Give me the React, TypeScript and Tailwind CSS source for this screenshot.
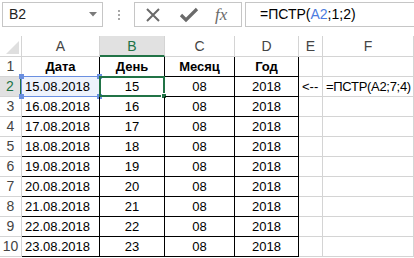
import React from "react";

const rows = [
  ["15.08.2018", "15", "08", "2018"],
  ["16.08.2018", "16", "08", "2018"],
  ["17.08.2018", "17", "08", "2018"],
  ["18.08.2018", "18", "08", "2018"],
  ["19.08.2018", "19", "08", "2018"],
  ["20.08.2018", "20", "08", "2018"],
  ["21.08.2018", "21", "08", "2018"],
  ["22.08.2018", "22", "08", "2018"],
  ["23.08.2018", "23", "08", "2018"],
];

const cols = ["A", "B", "C", "D", "E", "F"];

function Corner() {
  return (
    <div className="relative h-[21px] border-r border-b border-[#d4d4d4] bg-white">
      <svg className="absolute right-[2px] bottom-[2px]" width="13" height="13" viewBox="0 0 13 13">
        <polygon points="13,0 13,13 0,13" fill="#dfdfdf" />
      </svg>
    </div>
  );
}

function ColHeader({ label }: { label: string }) {
  const active = label === "B";
  return (
    <div
      className={
        active
          ? "flex h-[21px] items-center justify-center border-r border-b-2 border-r-[#d4d4d4] border-b-[#217346] bg-[#e1e1e1] pt-[2px] text-[14px] text-[#217346]"
          : "flex h-[21px] items-center justify-center border-r border-b border-[#d4d4d4] bg-white text-[14px] text-[#444]"
      }
    >
      {label}
    </div>
  );
}

function RowHeader({ n }: { n: number }) {
  const active = n === 2;
  return (
    <div
      className={
        active
          ? "flex h-5 items-center justify-center border-r-2 border-b border-r-[#217346] border-b-[#d4d4d4] bg-[#e1e1e1] text-[14px] text-[#217346]"
          : "flex h-5 items-center justify-center border-r border-b border-[#d4d4d4] bg-white text-[14px] text-[#444]"
      }
    >
      {n}
    </div>
  );
}

function Handle({ className }: { className: string }) {
  return <span className={"absolute h-[5px] w-[5px] bg-[#6a8fe0] " + className} />;
}

function Cell({
  children,
  dark,
  align = "center",
  bold,
}: {
  children?: React.ReactNode;
  dark?: boolean;
  align?: "left" | "center";
  bold?: boolean;
}) {
  return (
    <div
      className={
        "relative flex h-5 items-center whitespace-nowrap border-r border-b text-[13px] text-black " +
        (dark ? "border-black " : "border-[#d4d4d4] ") +
        (align === "left" ? "justify-start pl-[3px] " : "justify-center ") +
        (bold ? "font-bold" : "")
      }
    >
      {children}
    </div>
  );
}

export default function App() {
  return (
    <div
      className="h-[258px] w-[414px] overflow-hidden bg-white"
      style={{ fontFamily: '"Liberation Sans", Arial, sans-serif' }}
    >
      {/* formula bar */}
      <div className="flex h-9 items-start pt-[2px] pl-[2px]">
        <div className="flex h-[25px] w-[101px] items-center justify-between border border-[#c6c6c6] pr-[5px] pl-[6px] text-[14px] text-[#222]">
          <span>B2</span>
          <svg width="8" height="5" viewBox="0 0 8 5">
            <polygon points="0,0 8,0 4,4.5" fill="#7a7a7a" />
          </svg>
        </div>
        <div className="flex h-[25px] w-[31px] flex-col items-center justify-center gap-[2px]">
          <span className="h-[2px] w-[2px] bg-[#a8a8a8]" />
          <span className="h-[2px] w-[2px] bg-[#a8a8a8]" />
          <span className="h-[2px] w-[2px] bg-[#a8a8a8]" />
        </div>
        <div className="flex h-[25px] w-[108px] items-center border border-[#c6c6c6] pl-[10px]">
          <svg width="16" height="16" viewBox="0 0 16 16">
            <path d="M2 2 L14 14 M14 2 L2 14" stroke="#6a6a6a" strokeWidth="2" />
          </svg>
          <svg className="ml-[18px]" width="20" height="16" viewBox="0 0 20 16">
            <path d="M2 8 L7 13 L18 2" stroke="#6a6a6a" strokeWidth="3.2" fill="none" />
          </svg>
          <span
            className="ml-[16px] text-[17px] text-[#6a6a6a] italic"
            style={{ fontFamily: '"Liberation Serif", "Times New Roman", serif' }}
          >
            fx
          </span>
        </div>
        <div className="ml-[3px] flex h-[25px] flex-1 items-center border border-r-0 border-[#c6c6c6] pl-[14px] text-[14px] text-black">
          =ПСТР(<span className="text-[#4c7ce0]">A2</span>;1;2)
        </div>
      </div>

      {/* grid */}
      <div className="grid grid-cols-[22px_78px_65px_70px_64px_24px_1fr]">
        <Corner />
        {cols.map((c) => (
          <ColHeader key={c} label={c} />
        ))}

        <RowHeader n={1} />
        <Cell dark bold>Дата</Cell>
        <Cell dark bold>День</Cell>
        <Cell dark bold>Месяц</Cell>
        <Cell dark bold>Год</Cell>
        <Cell />
        <Cell />

        {rows.map((r, i) => {
          const n = i + 2;
          const first = n === 2;
          return (
            <React.Fragment key={n}>
              <RowHeader n={n} />
              <Cell dark align="left">
                {first && (
                  <>
                    <span className="absolute -top-px -left-px h-[21px] w-[79px] border border-[#6a8fe0] bg-[#eef3fc]" />
                    <Handle className="-top-[3px] -left-[3px]" />
                    <Handle className="-top-[3px] -right-[3px]" />
                    <Handle className="-bottom-[3px] -left-[3px]" />
                    <Handle className="-right-[3px] -bottom-[3px]" />
                  </>
                )}
                <span className="relative">{r[0]}</span>
              </Cell>
              <Cell dark>
                {first && (
                  <>
                    <span className="absolute -top-px -left-px h-[21px] w-[66px] border-2 border-[#217346]" />
                    <span className="absolute -right-[3px] -bottom-[3px] h-[6px] w-[6px] border border-white bg-[#217346]" />
                  </>
                )}
                <span className="relative">{r[1]}</span>
              </Cell>
              <Cell dark>{r[2]}</Cell>
              <Cell dark>{r[3]}</Cell>
              <Cell align="left">{first ? "<--" : null}</Cell>
              <Cell align="left">
                {first ? <span className="tracking-[-0.3px]">=ПСТР(A2;7;4)</span> : null}
              </Cell>
            </React.Fragment>
          );
        })}
      </div>
    </div>
  );
}
